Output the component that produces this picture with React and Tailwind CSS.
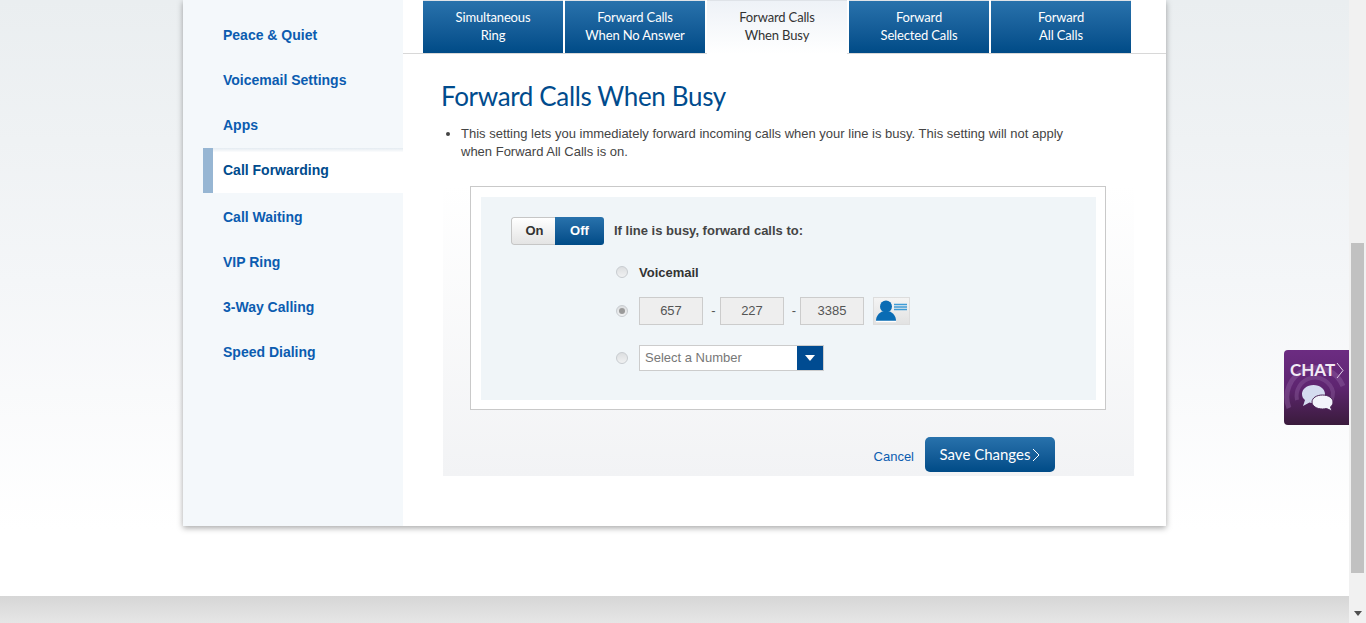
const sideLinks = [
  { label: "Peace & Quiet" },
  { label: "Voicemail Settings" },
  { label: "Apps" },
  { label: "Call Forwarding", active: true },
  { label: "Call Waiting" },
  { label: "VIP Ring" },
  { label: "3-Way Calling" },
  { label: "Speed Dialing" },
];

const tabs = [
  { top: "Simultaneous", bottom: "Ring" },
  { top: "Forward Calls", bottom: "When No Answer" },
  { top: "Forward Calls", bottom: "When Busy", active: true },
  { top: "Forward", bottom: "Selected Calls" },
  { top: "Forward", bottom: "All Calls" },
];

function Sidebar() {
  return (
    <nav className="flex w-[220px] shrink-0 flex-col bg-[#f4f8fb] pl-5 pt-[13px] text-[14px] font-bold text-[#0b5cb0]">
      {sideLinks.map((link) =>
        link.active ? (
          <a
            key={link.label}
            className="mb-[2px] flex h-[45px] items-center border-l-[10px] border-[#97b6d3] bg-gradient-to-b from-[#e4ebf1] via-white via-10% to-white pl-[10px] text-[#004b8d]"
          >
            {link.label}
          </a>
        ) : (
          <a key={link.label} className="flex h-[45px] items-center pl-5">
            {link.label}
          </a>
        )
      )}
    </nav>
  );
}

function Tabs() {
  return (
    <div className="flex h-[54px] gap-[2px] border-b border-[#d8d8d8] pl-5">
      {tabs.map((tab) => (
        <div
          key={tab.bottom}
          className={
            tab.active
              ? "flex h-[54px] w-[140px] flex-col items-center justify-center border-t border-[#dfe3e8] bg-gradient-to-b from-[#eef2f7] to-white pb-1 text-center font-['Lato',sans-serif] text-[13px] leading-[18px] tracking-[-0.15px] text-[#333]"
              : "flex h-[53px] w-[140px] flex-col items-center justify-center border-t border-[#dfe3e8] bg-gradient-to-b from-[#2872ac] to-[#004b87] pb-[3px] text-center font-['Lato',sans-serif] text-[13px] leading-[18px] tracking-[-0.15px] text-white"
          }
        >
          <span>{tab.top}</span>
          <span>{tab.bottom}</span>
        </div>
      ))}
    </div>
  );
}

function Radio({ checked, className = "" }) {
  return (
    <span className={`${className} flex h-3 w-3 items-center justify-center rounded-full border border-[#c8ccd0] bg-gradient-to-b from-[#dcdee0] to-[#f0f1f2]`}>
      {checked ? <span className="h-[6px] w-[6px] rounded-full bg-[#9a9a9a]" /> : null}
    </span>
  );
}

function PhoneBox({ value }) {
  return (
    <span className="flex h-7 w-16 items-center justify-center border border-[#cccccc] bg-[#eeeeee] text-[13px] text-[#555]">
      {value}
    </span>
  );
}

function ContactIcon() {
  return (
    <span className="flex h-7 w-[37px] items-center justify-center border border-[#dddddd] bg-gradient-to-b from-[#f4f4f4] to-[#e2e2e2]">
      <svg width="35" height="26" viewBox="0 0 35 26">
        <circle cx="12" cy="8.500" r="6" fill="#0a6cb4" />
        <path d="M2 23c0-5 3-8 6-9.500h8c3 1.500 6 4.500 6 9.500z" fill="#0a6cb4" />
        <path d="M2 23.500h20" stroke="white" strokeWidth="1.500" />
        <path d="M20 6.500h13M20 9h13M20 11.500h13" stroke="#3e9bd6" strokeWidth="1.300" />
      </svg>
    </span>
  );
}

function ForwardForm() {
  return (
    <div className="ml-[27px] w-[636px] border border-[#c9c9c9] bg-white pb-[9px] pl-[10px] pr-[9px] pt-[10px]">
      <div className="h-[203px] bg-[#f0f5f8] pl-[30px] pt-5">
        <div className="flex items-center">
          <div className="flex h-7 w-[93px] overflow-hidden rounded-[3px] text-[13px] font-bold">
            <span className="flex w-[44px] items-center justify-center rounded-l-[3px] border border-r-0 border-[#c6c6c6] bg-gradient-to-b from-white to-[#e4e4e4] pl-[2px] text-[#333]">
              On
            </span>
            <span className="flex flex-1 items-center justify-center bg-gradient-to-b from-[#2872ac] to-[#004b87] text-white">
              Off
            </span>
          </div>
          <span className="ml-[10px] text-[13px] font-bold text-[#444]">If line is busy, forward calls to:</span>
        </div>

        <div className="ml-[105px] mt-4 flex h-6 items-center">
          <Radio className="mb-[2px]" />
          <span className="ml-[11px] text-[13px] font-bold text-[#333]">Voicemail</span>
        </div>

        <div className="ml-[105px] mt-3 flex items-center">
          <Radio checked />
          <span className="ml-[11px] flex items-center">
            <PhoneBox value="657" />
            <span className="w-[17px] pl-1 text-center text-[13px] text-[#555]">-</span>
            <PhoneBox value="227" />
            <span className="w-4 pl-1 text-center text-[13px] text-[#555]">-</span>
            <PhoneBox value="3385" />
            <span className="ml-[9px]">
              <ContactIcon />
            </span>
          </span>
        </div>

        <div className="ml-[105px] mt-5 flex items-center">
          <Radio className="mb-[1px]" />
          <span className="ml-[11px] flex h-[26px] w-[185px] items-center justify-between border border-[#cccccc] bg-white pl-[5px] text-[13px] text-[#777]">
            Select a Number
            <span className="flex h-full w-[26px] items-center justify-center bg-[#004b91]">
              <span className="h-0 w-0 border-x-[5px] border-t-[6px] border-x-transparent border-t-white" />
            </span>
          </span>
        </div>
      </div>
    </div>
  );
}

function ChatBadge() {
  return (
    <div className="absolute right-0 top-[350px] h-[75px] w-[65px] overflow-hidden rounded-l-[4px] bg-gradient-to-b from-[#6c2c82] via-[#5e2570] to-[#3a1b3c]">
      <svg className="absolute inset-0" width="65" height="75" viewBox="0 0 65 75">
        <path d="M5 58A28 28 0 0 1 59 36" fill="none" stroke="#8a5a9c" strokeWidth="5" opacity="0.5" />
        <path d="M13 50A18 18 0 0 1 49 42c0 6-2 11-6 14" fill="none" stroke="#8a5a9c" strokeWidth="4" opacity="0.45" />
        <path d="M53 13l6 7.500-6 7.500" fill="none" stroke="#e3d3ea" strokeWidth="1" />
        <path d="M18 44c0-5 5-9 11.500-9S41 39 41 44s-5 9-11.500 9c-1.500 0-3-.2-4-.6L19 56l2-6c-2-1.500-3-3.500-3-6z" fill="#d4dcf0" />
        <path d="M28 52c0-4 4.500-7 10.500-7S49 48 49 52c0 2-1 3.800-2.500 5l1.500 4-5.500-2.500c-1.200.3-2.500.5-4 .5-6 0-10.500-3-10.500-7z" fill="#f1f3fa" stroke="#4a2255" strokeWidth="1" />
      </svg>
      <span className="absolute left-[6px] top-[9px] font-['Lato',sans-serif] text-[17px] font-bold leading-[22px] text-[#f2ebf5]">
        CHAT
      </span>
    </div>
  );
}

export default function App() {
  return (
    <div className="flex h-[623px] w-[1366px] overflow-hidden bg-white font-['Liberation_Sans',sans-serif]">
      <div className="relative flex w-[1349px] shrink-0 flex-col bg-gradient-to-b from-[#eaeef0] via-[#f4f6f8] via-45% to-white to-85%">
        <div className="ml-[183px] flex h-[526px] w-[983px] bg-white shadow-[0_2px_6px_rgba(0,0,0,0.35)]">
          <Sidebar />
          <main className="flex-1">
            <Tabs />
            <h1 className="ml-[38px] mt-[25px] font-['Lato',sans-serif] text-[26px] leading-[34px] tracking-[-0.35px] text-[#004b8d]">
              Forward Calls When Busy
            </h1>
            <ul className="ml-[58px] mt-[11.5px] w-[625px] list-disc text-[13px] leading-[18.6px] text-[#444]">
              <li>
                This setting lets you immediately forward incoming calls when your line is busy. This setting will not
                apply when Forward All Calls is on.
              </li>
            </ul>
            <section className="ml-10 mt-[23.5px] h-[291px] w-[691px] bg-gradient-to-b from-white to-[#f2f3f5] pt-[1px]">
              <ForwardForm />
              <div className="mr-[79px] mt-[27px] flex items-end justify-end">
                <a className="mb-[7px] mr-[11px] text-[13px] leading-4 text-[#0b5cb0]">Cancel</a>
                <button className="flex h-[35px] w-[130px] items-center justify-center gap-[2px] rounded-[5px] bg-gradient-to-b from-[#2872ac] to-[#004b87] font-['Lato',sans-serif] text-[15px] text-white">
                  Save Changes
                  <svg width="8" height="14" viewBox="0 0 8 14" fill="none" stroke="white" strokeWidth="1">
                    <path d="M1 1l6 6-6 6" />
                  </svg>
                </button>
              </div>
            </section>
          </main>
        </div>
        <div className="mt-[70px] h-[27px] bg-gradient-to-b from-[#d6d6d6] to-[#e6e6e6]" />
        <ChatBadge />
      </div>

      <div className="flex w-[17px] shrink-0 flex-col items-center bg-[#f1f1f1]">
        <div className="mt-[243px] h-[330px] w-[13px] bg-[#c1c1c1]" />
        <span className="mt-[38px] h-0 w-0 border-x-[4px] border-t-[5px] border-x-transparent border-t-[#505050]" />
      </div>
    </div>
  );
}
